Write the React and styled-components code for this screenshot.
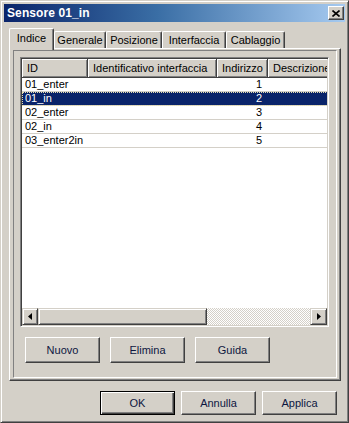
import React from "react";
import styled, { createGlobalStyle, css } from "styled-components";

const FACE = "#D4D0C8";

const Global = createGlobalStyle`
  html, body { margin: 0; padding: 0; background: ${FACE}; }
  body { font-family: "Liberation Sans", Arial, sans-serif; font-size: 11px; color: #000; }
  * { box-sizing: border-box; }
`;

const raised = css`
  border: 1px solid;
  border-color: #fff #404040 #404040 #fff;
  box-shadow: inset -1px -1px #808080;
`;

const Window = styled.div`
  width: 349px;
  height: 423px;
  background: ${FACE};
  border: 1px solid;
  border-color: ${FACE} #404040 #404040 ${FACE};
  box-shadow: inset 1px 1px #fff, inset -1px -1px #808080;
  padding: 3px;
  display: flex;
  flex-direction: column;
`;

const TitleBar = styled.div`
  height: 18px;
  background: linear-gradient(90deg, #0a246a 0%, #3a6ea5 45%, #a6caf0 100%);
  display: flex;
  align-items: center;
  padding: 0 2px 0 3px;
`;

const Title = styled.div`
  flex: 1;
  color: #fff;
  font-weight: bold;
  font-size: 12px;
  letter-spacing: 0.1px;
`;

const CloseBtn = styled.div`
  width: 16px;
  height: 14px;
  background: ${FACE};
  border: 1px solid;
  border-color: #fff #404040 #404040 #fff;
  box-shadow: inset -1px -1px #808080;
  display: flex;
  align-items: center;
  justify-content: center;
  margin-right: -1px;
`;

const Body = styled.div`
  padding: 6px 0 0 5px;
  display: flex;
  flex-direction: column;
`;

const TabRow = styled.div`
  display: flex;
  align-items: flex-end;
  height: 20px;
  position: relative;
  z-index: 2;
`;

const Tab = styled.div`
  width: ${(p) => p.$w}px;
  height: ${(p) => (p.$active ? 22 : 17)}px;
  margin-bottom: ${(p) => (p.$active ? -2 : 0)}px;
  background: ${FACE};
  border-top: 1px solid #fff;
  border-left: 1px solid #fff;
  border-right: 1px solid #404040;
  box-shadow: inset -1px 0 #808080;
  border-radius: 2px 2px 0 0;
  display: flex;
  align-items: ${(p) => (p.$active ? "flex-start" : "center")};
  padding-top: ${(p) => (p.$active ? 3 : 0)}px;
  justify-content: center;
  font-size: 11px;
`;

const Panel = styled.div`
  width: 332px;
  background: ${FACE};
  border: 1px solid;
  border-color: #fff #404040 #404040 #fff;
  box-shadow: inset -1px -1px #808080;
  padding: 1px 3px 2px 3px;
`;

const Frame = styled.div`
  height: 328px;
  border: 1px solid;
  border-color: #808080 #fff #fff #808080;
  padding: 6px 6px 0 6px;
  display: flex;
  flex-direction: column;
`;

const ListView = styled.div`
  width: 309px;
  height: 270px;
  background: #fff;
  border: 1px solid;
  border-color: #808080 #fff #fff #808080;
  box-shadow: inset 1px 1px #404040, inset -1px -1px ${FACE};
  padding: 1px;
  display: flex;
  flex-direction: column;
  overflow: hidden;
`;

const Content = styled.div`
  flex: 1;
  overflow: hidden;
`;

const Line = styled.div`
  display: flex;
  width: 490px;
`;

const HeadCell = styled.div`
  width: ${(p) => p.$w}px;
  flex: none;
  height: 19px;
  background: ${FACE};
  border-right: 1px solid #404040;
  border-bottom: 1px solid #404040;
  box-shadow: inset 1px 1px #fff, inset -1px -1px #808080;
  display: flex;
  align-items: center;
  padding-left: 5px;
  white-space: nowrap;
  overflow: hidden;
`;

const Row = styled.div`
  display: flex;
  width: 490px;
  height: 14px;
  border-bottom: 1px solid ${FACE};
  background: ${(p) => (p.$sel ? "#0a246a" : "#fff")};
  color: ${(p) => (p.$sel ? "#fff" : "#000")};
  ${(p) =>
    p.$sel &&
    css`
      outline: 1px dotted #e8e0b0;
      outline-offset: -1px;
    `}
`;

const Cell = styled.div`
  width: ${(p) => p.$w}px;
  flex: none;
  line-height: 13px;
  padding: 0 ${(p) => (p.$right ? 6 : 0)}px 0 ${(p) => (p.$right ? 0 : 3)}px;
  text-align: ${(p) => (p.$right ? "right" : "left")};
  white-space: nowrap;
  overflow: hidden;
`;

const ScrollBar = styled.div`
  height: 17px;
  display: flex;
  flex: none;
`;

const ScrollBtn = styled.div`
  width: ${(p) => p.$w}px;
  flex: none;
  background: ${FACE};
  border: 1px solid;
  border-color: ${FACE} #404040 #404040 ${FACE};
  box-shadow: inset 1px 1px #fff, inset -1px -1px #808080;
  display: flex;
  align-items: center;
  justify-content: center;
`;

const Track = styled.div`
  flex: 1;
  background: repeating-conic-gradient(${FACE} 0% 25%, #fff 0% 50%) 0 0 / 2px 2px;
`;

const ButtonRow = styled.div`
  display: flex;
  gap: 10px;
  padding-left: 5px;
  margin-top: 10px;
`;

const Button = styled.div`
  width: 75px;
  height: ${(p) => p.$h || 23}px;
  background: ${FACE};
  ${raised}
  display: flex;
  align-items: center;
  justify-content: center;
  font-size: 11px;
  color: #0d1640;
  ${(p) =>
    p.$default &&
    css`
      border: 1px solid #000;
      box-shadow: inset 1px 1px #fff, inset -1px -1px #404040, inset -2px -2px #808080;
    `}
`;

const Footer = styled.div`
  display: flex;
  justify-content: flex-end;
  gap: 6px;
  padding-right: 8px;
  margin-top: 10px;
`;

const Arrow = ({ dir }) => (
  <svg width="4" height="7" viewBox="0 0 4 7">
    {dir === "left" ? (
      <polygon points="4,0 4,7 0,3.5" fill="#000" />
    ) : (
      <polygon points="0,0 0,7 4,3.5" fill="#000" />
    )}
  </svg>
);

const cols = [
  { w: 66, label: "ID" },
  { w: 129, label: "Identificativo interfaccia" },
  { w: 51, label: "Indirizzo" },
  { w: 244, label: "Descrizione" },
];

const rows = [
  ["01_enter", "1"],
  ["01_in", "2"],
  ["02_enter", "3"],
  ["02_in", "4"],
  ["03_enter2in", "5"],
];

const tabs = [
  { label: "Indice", w: 45, active: true },
  { label: "Generale", w: 52 },
  { label: "Posizione", w: 56 },
  { label: "Interfaccia", w: 64 },
  { label: "Cablaggio", w: 59 },
];

export default function App() {
  return (
    <>
      <Global />
      <Window>
        <TitleBar>
          <Title>Sensore 01_in</Title>
          <CloseBtn>
            <svg width="8" height="7" viewBox="0 0 8 7">
              <path d="M0.5 0.5 L7.5 6.5 M7.5 0.5 L0.5 6.5" stroke="#000" strokeWidth="1.6" />
            </svg>
          </CloseBtn>
        </TitleBar>
        <Body>
          <TabRow>
            {tabs.map((t) => (
              <Tab key={t.label} $w={t.w} $active={t.active}>
                {t.label}
              </Tab>
            ))}
          </TabRow>
          <Panel>
            <Frame>
              <ListView>
                <Content>
                  <Line>
                    {cols.map((c) => (
                      <HeadCell key={c.label} $w={c.w}>
                        {c.label}
                      </HeadCell>
                    ))}
                  </Line>
                  {rows.map(([id, addr], i) => (
                    <Row key={id} $sel={i === 1}>
                      <Cell $w={66}>{id}</Cell>
                      <Cell $w={129}></Cell>
                      <Cell $w={51} $right>
                        {addr}
                      </Cell>
                      <Cell $w={244}></Cell>
                    </Row>
                  ))}
                </Content>
                <ScrollBar>
                  <ScrollBtn $w={16}>
                    <Arrow dir="left" />
                  </ScrollBtn>
                  <ScrollBtn $w={169} />
                  <Track />
                  <ScrollBtn $w={17}>
                    <Arrow dir="right" />
                  </ScrollBtn>
                </ScrollBar>
              </ListView>
              <ButtonRow>
                <Button $h={26}>Nuovo</Button>
                <Button $h={26}>Elimina</Button>
                <Button $h={26}>Guida</Button>
              </ButtonRow>
            </Frame>
          </Panel>
        </Body>
        <Footer>
          <Button $h={24} $default>
            OK
          </Button>
          <Button $h={24}>Annulla</Button>
          <Button $h={24}>Applica</Button>
        </Footer>
      </Window>
    </>
  );
}
